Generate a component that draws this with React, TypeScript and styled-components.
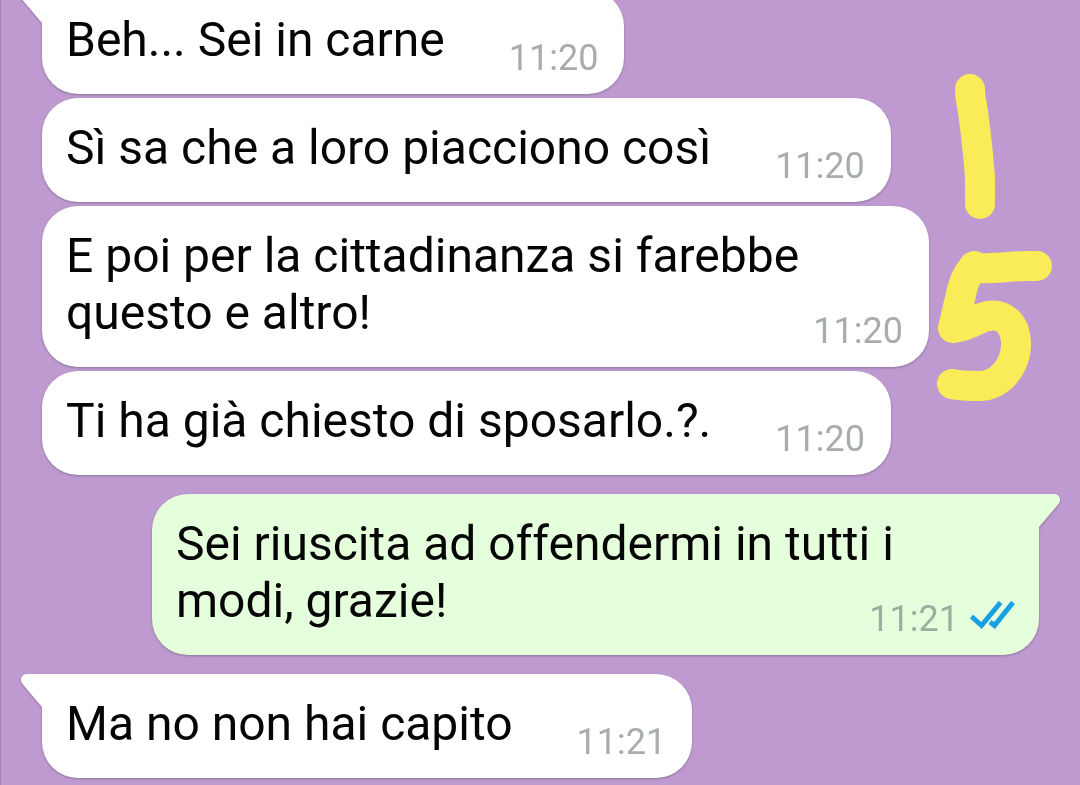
import React from "react";
import styled, { createGlobalStyle, css } from "styled-components";

const GlobalStyle = createGlobalStyle`
  body {
    margin: 0;
    background: #be9ad0;
    font-family: Roboto, "Liberation Sans", sans-serif;
  }
`;

const Chat = styled.main`
  position: relative;
  box-sizing: border-box;
  height: 100vh;
  overflow: hidden;
  display: flex;
  flex-direction: column;
  justify-content: flex-end;
  padding: 0 41px 7px;
  border-left: 1px solid #a385b8;
`;

const Thread = styled.ol`
  list-style: none;
  margin: 0;
  padding: 0;
  display: flex;
  flex-direction: column;
  gap: 19px;
`;

const Group = styled.li<{ $own?: boolean }>`
  display: flex;
  flex-direction: column;
  align-items: ${(p) => (p.$own ? "flex-end" : "flex-start")};
  gap: 4px;
`;

const Bubble = styled.article<{ $own?: boolean; $tail?: boolean }>`
  position: relative;
  box-sizing: border-box;
  max-width: 887px;
  display: flow-root;
  padding: 21px ${(p) => (p.$own ? 24 : 26)}px 15px 24px;
  border-radius: 36px;
  background: ${(p) => (p.$own ? "#e5ffdc" : "#ffffff")};
  filter: drop-shadow(0 1px 1px rgba(90, 80, 100, 0.5));
  font-size: 48px;
  line-height: 57px;
  color: #050505;
  ${(p) =>
    p.$tail &&
    (p.$own
      ? css`
          border-top-right-radius: 0;
        `
      : css`
          border-top-left-radius: 0;
        `)}
`;

const Tail = styled.svg<{ $own?: boolean }>`
  position: absolute;
  top: 0;
  ${(p) => (p.$own ? "left: 100%; transform: scaleX(-1);" : "right: 100%;")}
  display: block;
  width: 21px;
  height: 34px;
  fill: ${(p) => (p.$own ? "#e5ffdc" : "#ffffff")};
`;

/* Floats beside the last line of the message when there is room. */
const Stamp = styled.span`
  float: right;
  display: flex;
  align-items: center;
  gap: 10px;
  margin: 26px 0 0 64px;
  font-size: 36px;
  line-height: 42px;
  color: rgba(112, 116, 120, 0.6);
`;

const Ticks = styled.svg`
  display: block;
  width: 46px;
  height: 36px;
  fill: none;
  stroke: #18a1e2;
  stroke-width: 5;
`;

const Doodle = styled.svg`
  position: absolute;
  top: 0;
  right: 0;
  width: 160px;
  height: 420px;
  fill: none;
  stroke: #faeb58;
  stroke-width: 30;
  stroke-linecap: round;
  stroke-linejoin: round;
`;

interface MessageData {
  text: string;
  time: string;
}

interface GroupData {
  own?: boolean;
  messages: MessageData[];
}

const groups: GroupData[] = [
  {
    messages: [
      { text: "Beh... Sei in carne", time: "11:20" },
      { text: "Sì sa che a loro piacciono così", time: "11:20" },
      { text: "E poi per la cittadinanza si farebbe questo e altro!", time: "11:20" },
      { text: "Ti ha già chiesto di sposarlo.?.", time: "11:20" },
    ],
  },
  {
    own: true,
    messages: [
      { text: "Sei riuscita ad offendermi in tutti i modi, grazie!", time: "11:21" },
    ],
  },
  { messages: [{ text: "Ma no non hai capito", time: "11:21" }] },
];

function Message({ text, time, own, tail }: MessageData & { own?: boolean; tail: boolean }) {
  return (
    <Bubble $own={own} $tail={tail}>
      {tail && (
        <Tail $own={own} viewBox="0 0 21 34" aria-hidden="true">
          <path d="M21 0H6C1 0-2 5 1.500 10L21 33Z" />
        </Tail>
      )}
      <span>{text}</span>
      <Stamp>
        <time>{time}</time>
        {own && (
          <Ticks viewBox="0 0 46 36" role="img" aria-label="Letto">
            <path d="M2.500 15.500L12.500 24.500L31.500 1.500" />
            <path d="M21 21L25.500 24.500L44 1.500" />
          </Ticks>
        )}
      </Stamp>
    </Bubble>
  );
}

export default function App() {
  return (
    <>
      <GlobalStyle />
      <Chat>
        <Thread>
          {groups.map((group, g) => (
            <Group key={g} $own={group.own}>
              {group.messages.map((message, m) => (
                <Message key={m} {...message} own={group.own} tail={m === 0} />
              ))}
            </Group>
          ))}
        </Thread>
        <Doodle viewBox="0 0 160 420" aria-hidden="true">
          <path d="M50 89C50 99 52 104 53 112C56 134 58 150 60 178V204" />
          <path d="M117 266H106C92 266 76 269 59 268L54 266C46 276 44 282 42 290L33 328C45 327 53 322 61 318C69 315 73 315 78 316C86 318 91 324 94 331C97 340 96 349 95 354C90 373 77 385 61 386C51 386 41 386 32 384" />
        </Doodle>
      </Chat>
    </>
  );
}
